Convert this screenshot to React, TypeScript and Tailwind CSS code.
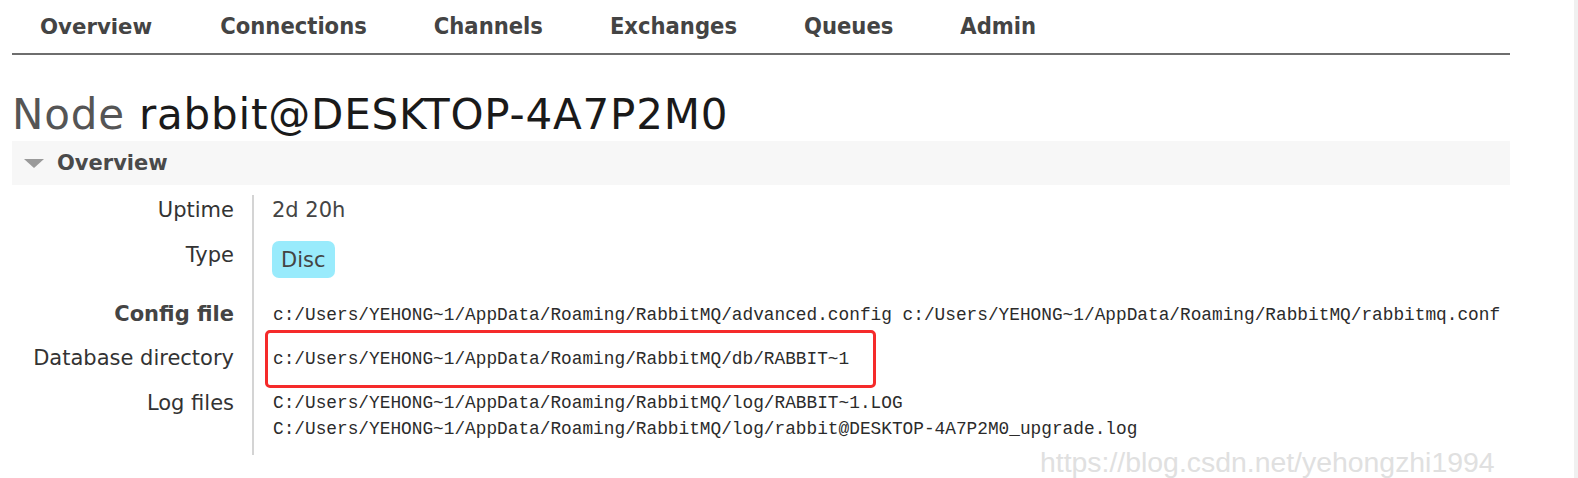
const sans = "font-['DejaVu_Sans',_Verdana,_sans-serif]"
const cond = "font-['DejaVu_Sans_Condensed',_'DejaVu_Sans',_sans-serif]"
const mono = "font-['Liberation_Mono',_monospace]"

const navItems = ["Connections", "Channels", "Exchanges", "Queues", "Admin"]

const App = () => {
    return (
        <div className="relative flex w-[1578px] h-[478px] overflow-hidden bg-white">
            <div className="w-[1574px] pl-[12px]">
                <div className="w-[1498px]">
                    {/* top menu */}
                    <div className="h-[55px] border-b-2 border-[#6e6e6e] pt-[14px] pl-[28px] flex items-baseline gap-[67px] text-[#444] font-bold leading-[24px]">
                        <span className={`${sans} text-[21.3px] mr-[1px]`}>Overview</span>
                        {navItems.map((n) => (
                            <span key={n} className={`${cond} text-[23.5px]`}>{n}</span>
                        ))}
                    </div>

                    <h1 className={`${sans} mt-[39px] mb-[5px] text-[42px] leading-[42px] tracking-[0.8px] whitespace-nowrap`}>
                        <span className="text-[#555]">Node </span>
                        <span className="text-[#1a1a1a]">rabbit@DESKTOP-4A7P2M0</span>
                    </h1>

                    {/* section header */}
                    <div className="h-[44px] bg-[#f7f7f7] flex items-center pl-[12px] gap-[13px]">
                        <svg width="20" height="9" viewBox="0 0 20 9">
                            <polygon points="0,0 20,0 10,9" fill="#9a9a9a" />
                        </svg>
                        <span className={`${sans} text-[21px] font-bold text-[#4a4a4a] leading-[24px]`}>Overview</span>
                    </div>

                    {/* node details */}
                    <div className={`${sans} mt-[10px] text-[21px] leading-[24px] text-[#333]`}>
                        <div className="flex h-[36px]">
                            <div className="w-[222px] text-right pt-[3px]">Uptime</div>
                            <div className="ml-[18px] border-l-2 border-[#d4d4d4] pl-[18px] pt-[3px] text-[#444] flex-1">2d 20h</div>
                        </div>
                        <div className="flex h-[59px]">
                            <div className="w-[222px] text-right pt-[12px]">Type</div>
                            <div className="ml-[18px] border-l-2 border-[#d4d4d4] pl-[18px] pt-[10px] flex-1">
                                <span className="inline-flex items-center h-[37px] px-[9px] rounded-[7px] bg-[#99ebfc] text-[#444]">Disc</span>
                            </div>
                        </div>
                        <div className="flex h-[46px]">
                            <div className="w-[222px] text-right pt-[12px] font-bold text-[#444]">Config file</div>
                            <div className={`${mono} ml-[18px] border-l-2 border-[#d4d4d4] pl-[19px] pt-[13px] text-[17.8px] text-[#2b2b2b] whitespace-nowrap flex-1`}>
                                c:/Users/YEHONG~1/AppData/Roaming/RabbitMQ/advanced.config c:/Users/YEHONG~1/AppData/Roaming/RabbitMQ/rabbitmq.conf
                            </div>
                        </div>
                        <div className="flex h-[44px]">
                            <div className="w-[222px] text-right pt-[10px]">Database directory</div>
                            <div className={`${mono} ml-[18px] border-l-2 border-[#d4d4d4] pl-[19px] pt-[11px] text-[17.8px] text-[#2b2b2b] whitespace-nowrap flex-1`}>
                                c:/Users/YEHONG~1/AppData/Roaming/RabbitMQ/db/RABBIT~1
                            </div>
                        </div>
                        <div className="flex h-[75px]">
                            <div className="w-[222px] text-right pt-[11px]">Log files</div>
                            <div className={`${mono} ml-[18px] border-l-2 border-[#d4d4d4] pl-[19px] pt-[10px] text-[17.8px] leading-[26px] text-[#2b2b2b] whitespace-nowrap flex-1`}>
                                <div>C:/Users/YEHONG~1/AppData/Roaming/RabbitMQ/log/RABBIT~1.LOG</div>
                                <div>C:/Users/YEHONG~1/AppData/Roaming/RabbitMQ/log/rabbit@DESKTOP-4A7P2M0_upgrade.log</div>
                            </div>
                        </div>
                    </div>
                </div>
            </div>
            <div className="w-[4px] h-full bg-[#f0f0f0]" />

            {/* annotation box */}
            <div className="absolute left-[265px] top-[330px] w-[611px] h-[58px] border-[3px] border-[#f52a2a] rounded-[5px]" />

            {/* watermark */}
            <div className="absolute left-[1040px] top-[446px] font-['Liberation_Sans',_Arial,_sans-serif] text-[28.4px] leading-[32px] text-[#e0e0e0] whitespace-nowrap">
                https://blog.csdn.net/yehongzhi1994
            </div>
        </div>
    )
}

export default App
